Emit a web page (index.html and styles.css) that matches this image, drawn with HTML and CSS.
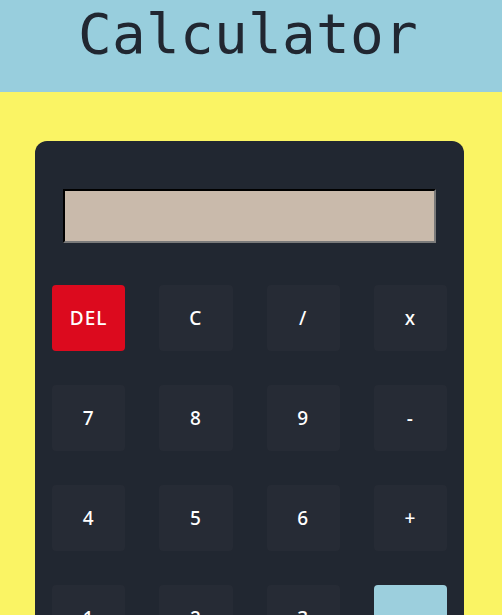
FILE: index.html
```html
<!DOCTYPE html>
<html lang="en">
<head>
<meta charset="utf-8">
<title>Calculator</title>
<link rel="stylesheet" href="styles.css">
</head>
<body>
<header class="top">
  <h1 class="title">Calculator</h1>
</header>
<main class="page">
  <div class="calc">
    <input class="display" type="text" readonly>
    <div class="keys">
      <button class="key key-del">DEL</button>
      <button class="key">C</button>
      <button class="key">/</button>
      <button class="key">x</button>
      <button class="key">7</button>
      <button class="key">8</button>
      <button class="key">9</button>
      <button class="key">-</button>
      <button class="key">4</button>
      <button class="key">5</button>
      <button class="key">6</button>
      <button class="key">+</button>
      <button class="key">1</button>
      <button class="key">2</button>
      <button class="key">3</button>
      <button class="key key-eq">=</button>
    </div>
  </div>
</main>
</body>
</html>
```
FILE: styles.css
```css
html, body {
  margin: 0;
  padding: 0;
}
body {
  background: #faf464;
  font-family: "Noto Sans", "Open Sans", sans-serif;
  overflow: hidden;
}
.top {
  background: #98cedd;
  height: 92px;
  display: flex;
  justify-content: center;
}
.title {
  margin: 0;
  padding-top: 2px;
  padding-right: 6px;
  font-family: "DejaVu Sans Mono", monospace;
  font-weight: 400;
  font-size: 56px;
  line-height: 64px;
  color: #212731;
  letter-spacing: 0.3px;
}
.page {
  padding-top: 49px;
  padding-left: 35px;
}
.calc {
  width: 429px;
  box-sizing: border-box;
  background: #212731;
  border-radius: 12px;
  padding: 48px 17px 60px;
}
.display {
  display: block;
  box-sizing: border-box;
  width: 373px;
  height: 54px;
  margin: 0 0 42px 11px;
  background: #c9baab;
  border: 2px inset #767676;
  border-top-color: #1c1c20;
  border-left-color: #1c1c20;
  border-bottom-color: #7a7a7a;
  border-right-color: #7a7a7a;
  padding: 0;
}
.keys {
  display: grid;
  grid-template-columns: repeat(4, 1fr);
  grid-auto-rows: 66px;
  column-gap: 34px;
  row-gap: 34px;
}
.key {
  border: none;
  border-radius: 4px;
  background: #262b35;
  color: #ffffff;
  font-family: "Noto Sans", "Open Sans", sans-serif;
  font-size: 19px;
  font-weight: 500;
  letter-spacing: 1px;
  padding: 0;
}
.key-del {
  background: #dc0a1e;
}
.key-eq {
  background: #9ccfdd;
}
```
